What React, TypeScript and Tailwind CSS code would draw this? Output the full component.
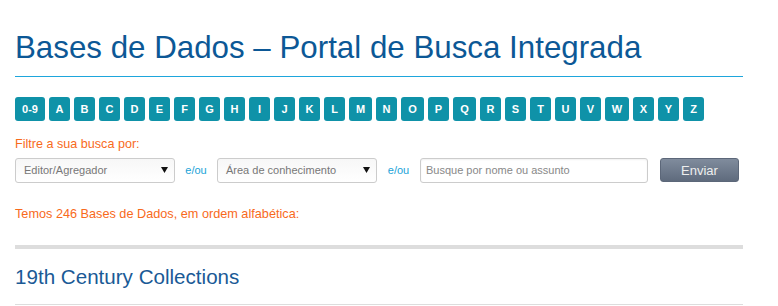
const LETTERS = ["0-9", "A", "B", "C", "D", "E", "F", "G", "H", "I", "J", "K", "L", "M", "N", "O", "P", "Q", "R", "S", "T", "U", "V", "W", "X", "Y", "Z"];

// wider pills for the wide glyphs
function pillWidth(l: string) {
  if (l === "0-9") return "w-[30px]";
  if (l === "W") return "w-[24px]";
  if (l === "M" || l === "O" || l === "Q") return "w-[23px]";
  return "w-[21px]";
}

function Caret() {
  return (
    <svg width="7" height="6" viewBox="0 0 7 6" className="shrink-0">
      <path d="M0 0h7L3.5 6z" fill="#111" />
    </svg>
  );
}

function FakeSelect({ label }: { label: string }) {
  return (
    <div className="flex h-[25px] w-[160px] items-center justify-between rounded-[3px] border border-[#cccccc] bg-gradient-to-b from-[#f7f7f7] to-white pl-[8px] pr-[6px]">
      <span className="text-[11px] leading-none text-[#777777]">{label}</span>
      <Caret />
    </div>
  );
}

function AndOr({ w }: { w: string }) {
  return (
    <span className={`${w} text-center text-[11px] leading-none text-[#1aa3d8]`}>
      e/ou
    </span>
  );
}

export default function App() {
  return (
    <div
      className="min-h-[306px] bg-white"
      style={{ fontFamily: '"Liberation Sans", Arial, sans-serif' }}
    >
      <div className="ml-[15px] w-[728px]">
        <h1 className="h-[77px] border-b border-[#1ea6dc] pt-[32px] text-[31.3px] font-normal leading-none text-[#0c5896]">
          Bases de Dados – Portal de Busca Integrada
        </h1>

        <div className="mt-[20px] flex gap-[4px]">
          {LETTERS.map((l) => (
            <a
              key={l}
              href="#"
              className={`${pillWidth(l)} flex h-[24px] items-center justify-center rounded-[3px] bg-[#0f92a8] text-[11px] font-bold text-white`}
            >
              {l}
            </a>
          ))}
        </div>

        <p className="mt-[17px] text-[12.6px] leading-none text-[#f86a1c]">
          Filtre a sua busca por:
        </p>

        <div className="mt-[7px] flex items-center">
          <FakeSelect label="Editor/Agregador" />
          <AndOr w="w-[42px]" />
          <FakeSelect label="Área de conhecimento" />
          <AndOr w="w-[43px]" />
          <div className="flex h-[25px] w-[228px] items-center rounded-[3px] border border-[#cccccc] bg-white pl-[5px] shadow-[inset_0_1px_2px_rgba(0,0,0,0.06)]">
            <span className="text-[11px] leading-none text-[#888888]">
              Busque por nome ou assunto
            </span>
          </div>
          <button className="ml-[12px] h-[24px] w-[79px] rounded-[3px] border border-[#5c6779] bg-gradient-to-b from-[#808c9d] to-[#5f6b7d] text-[13px] leading-none text-[#eeeeee]">
            Enviar
          </button>
        </div>

        <p className="mt-[25px] text-[12.7px] leading-none text-[#f86a1c]">
          Temos 246 Bases de Dados, em ordem alfabética:
        </p>

        <div className="mt-[25px] h-[4px] bg-[#dddddd]" />

        <h2 className="mt-[18px] border-b border-[#dddddd] pb-[16px] text-[20.6px] font-normal leading-none text-[#1a5a96]">
          19th Century Collections
        </h2>
      </div>
    </div>
  );
}
